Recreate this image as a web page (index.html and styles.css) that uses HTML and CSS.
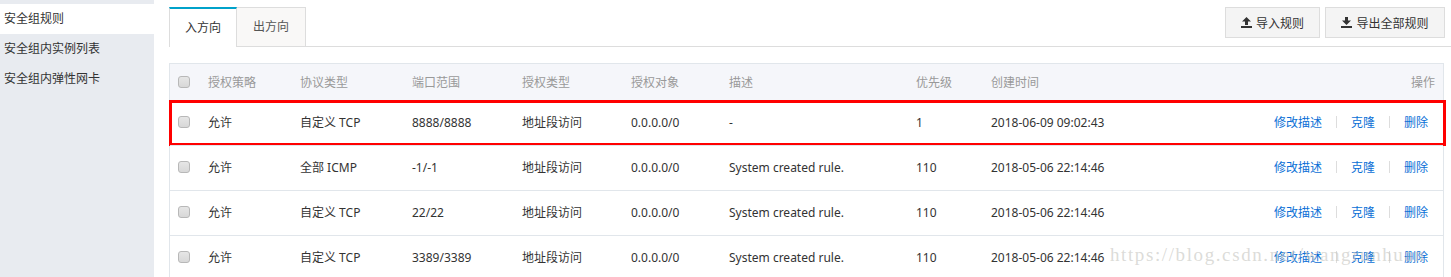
FILE: index.html
```html
<!DOCTYPE html>
<html lang="zh-CN">
<head>
<meta charset="utf-8">
<title>安全组规则</title>
<link rel="stylesheet" href="styles.css">
</head>
<body>
<div class="page">
  <aside class="sidebar">
    <div class="nav-item active">安全组规则</div>
    <div class="nav-item">安全组内实例列表</div>
    <div class="nav-item">安全组内弹性网卡</div>
  </aside>
  <main class="main">
    <div class="toolbar">
      <div class="tabs">
        <div class="tab active">入方向</div>
        <div class="tab">出方向</div>
      </div>
      <div class="actions-top">
        <button class="btn btn-import"><svg class="ico" viewBox="0 0 11 11" width="11" height="11"><path d="M5.5 0 L10 4.5 H7 V8 H4 V4.5 H1 Z" fill="#333"/><rect x="0" y="9" width="11" height="2" fill="#333"/></svg>导入规则</button>
        <button class="btn btn-export"><svg class="ico" viewBox="0 0 11 11" width="11" height="11"><path d="M5.5 8 L10 3.5 H7 V0 H4 V3.5 H1 Z" fill="#333"/><rect x="0" y="9" width="11" height="2" fill="#333"/></svg>导出全部规则</button>
      </div>
    </div>
    <div class="table">
      <div class="row head">
        <div class="cell cb"><span class="checkbox"></span></div>
        <div class="cell">授权策略</div>
        <div class="cell">协议类型</div>
        <div class="cell">端口范围</div>
        <div class="cell">授权类型</div>
        <div class="cell">授权对象</div>
        <div class="cell">描述</div>
        <div class="cell">优先级</div>
        <div class="cell">创建时间</div>
        <div class="cell op">操作</div>
      </div>
      <div class="row highlight">
        <div class="cell cb"><span class="checkbox"></span></div>
        <div class="cell">允许</div>
        <div class="cell">自定义 TCP</div>
        <div class="cell">8888/8888</div>
        <div class="cell">地址段访问</div>
        <div class="cell">0.0.0.0/0</div>
        <div class="cell">-</div>
        <div class="cell">1</div>
        <div class="cell">2018-06-09 09:02:43</div>
        <div class="cell op"><a class="link">修改描述</a><span class="sep"></span><a class="link">克隆</a><span class="sep"></span><a class="link">删除</a></div>
      </div>
      <div class="row">
        <div class="cell cb"><span class="checkbox"></span></div>
        <div class="cell">允许</div>
        <div class="cell">全部 ICMP</div>
        <div class="cell">-1/-1</div>
        <div class="cell">地址段访问</div>
        <div class="cell">0.0.0.0/0</div>
        <div class="cell">System created rule.</div>
        <div class="cell">110</div>
        <div class="cell">2018-05-06 22:14:46</div>
        <div class="cell op"><a class="link">修改描述</a><span class="sep"></span><a class="link">克隆</a><span class="sep"></span><a class="link">删除</a></div>
      </div>
      <div class="row">
        <div class="cell cb"><span class="checkbox"></span></div>
        <div class="cell">允许</div>
        <div class="cell">自定义 TCP</div>
        <div class="cell">22/22</div>
        <div class="cell">地址段访问</div>
        <div class="cell">0.0.0.0/0</div>
        <div class="cell">System created rule.</div>
        <div class="cell">110</div>
        <div class="cell">2018-05-06 22:14:46</div>
        <div class="cell op"><a class="link">修改描述</a><span class="sep"></span><a class="link">克隆</a><span class="sep"></span><a class="link">删除</a></div>
      </div>
      <div class="row">
        <div class="cell cb"><span class="checkbox"></span></div>
        <div class="cell">允许</div>
        <div class="cell">自定义 TCP</div>
        <div class="cell">3389/3389</div>
        <div class="cell">地址段访问</div>
        <div class="cell">0.0.0.0/0</div>
        <div class="cell">System created rule.</div>
        <div class="cell">110</div>
        <div class="cell">2018-05-06 22:14:46</div>
        <div class="cell op"><a class="link">修改描述</a><span class="sep"></span><a class="link">克隆</a><span class="sep"></span><a class="link">删除</a></div>
      </div>
    </div>
  </main>
  <div class="watermark">https://blog.csdn.net/wangrunhuan</div>
</div>
</body>
</html>
```
FILE: styles.css
```css
* { box-sizing: border-box; }
html, body { margin: 0; padding: 0; background: #fff; }
body {
  font-family: "Noto Sans", "Noto Sans CJK SC", sans-serif;
  font-size: 12px;
  color: #333;
}
.page {
  position: relative;
  display: flex;
  width: 1451px;
  height: 277px;
  overflow: hidden;
}
.sidebar {
  width: 154px;
  flex: none;
  background: #e8ebf0;
  padding-top: 4px;
}
.nav-item {
  height: 30px;
  line-height: 30px;
  padding-left: 4px;
  color: #333;
}
.nav-item.active { background: #fff; }
.main {
  flex: 1;
  padding-left: 15px;
  padding-top: 7px;
}
.toolbar {
  display: flex;
  justify-content: space-between;
  align-items: flex-start;
  border-bottom: 1px solid #ddd;
  height: 40px;
}
.tabs { display: flex; }
.tab {
  height: 39px;
  line-height: 38px;
  padding: 0 16px;
  white-space: nowrap;
  border: 1px solid #ddd;
  border-bottom: none;
  background: #f9f8f7;
  color: #555;
}
.tab + .tab { border-left: none; }
.tab.active {
  padding: 0 15px;
  background: #fff;
  color: #333;
  border-top: 2px solid #00a2ca;
  height: 40px;
  line-height: 37px;
}
.actions-top {
  display: flex;
  gap: 5px;
  margin-right: 6px;
}
.btn {
  display: flex;
  align-items: center;
  justify-content: center;
  gap: 4px;
  height: 31px;
  padding: 0 10px;
  border: 1px solid #ddd;
  background: #f4f4f4;
  font: inherit;
  color: #333;
  white-space: nowrap;
}
.btn-import { width: 95px; }
.btn-export { width: 120px; }
.ico { display: block; }
.table {
  margin-top: 16px;
  margin-right: 7px;
  border: 1px solid #e1e6eb;
  border-bottom: none;
}
.row {
  display: grid;
  grid-template-columns: 38px 92px 112px 110px 109px 98px 187px 75px 1fr auto;
  align-items: center;
  height: 45px;
  padding-bottom: 2px;
  border-top: 1px solid #e1e6eb;
  position: relative;
}
.row.head {
  height: 36px;
  padding-bottom: 0;
  border-top: none;
  background: #f5f6fa;
  color: #999;
}
.cell { white-space: nowrap; }
.cell.cb { padding-left: 8px; display: flex; }
.cell.op {
  padding-right: 8px;
  display: flex;
  align-items: center;
  justify-content: flex-end;
}
.row:not(.head) .cell.op { padding-right: 15px; }
.checkbox {
  display: inline-block;
  width: 12px;
  height: 12px;
  border: 1px solid #b8b8b8;
  border-radius: 3px;
  background: linear-gradient(#e6e6e6, #d8d8d8);
}
.link { color: #0a6fd6; cursor: pointer; }
.sep {
  display: inline-block;
  width: 1px;
  height: 12px;
  background: #ddd;
  margin: 0 14px;
}
.row.highlight::after {
  content: "";
  position: absolute;
  left: -1px;
  right: -3px;
  top: -1px;
  bottom: -1px;
  border: 3px solid #f00;
  pointer-events: none;
}
.watermark {
  position: absolute;
  left: 1110px;
  top: 244px;
  font-family: "Liberation Serif", serif;
  font-size: 19px;
  letter-spacing: 1.6px;
  color: rgba(200, 200, 195, 0.65);
  white-space: nowrap;
  pointer-events: none;
}
```
